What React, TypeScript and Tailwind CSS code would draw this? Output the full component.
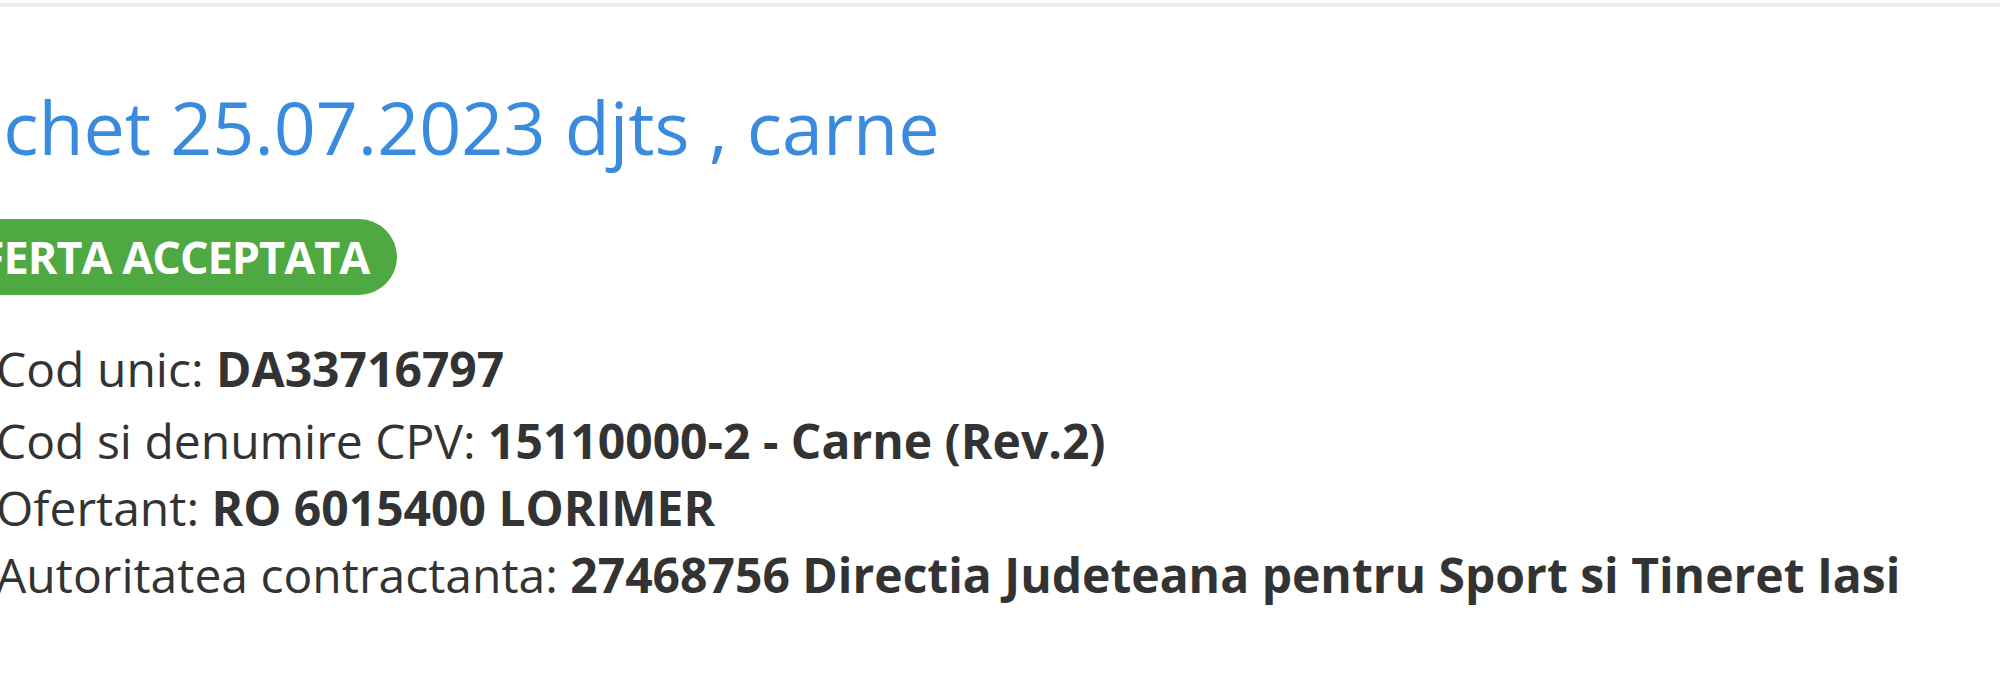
import React from 'react';

const rows = [
  { label: 'Cod unic:', value: 'DA33716797' },
  { label: 'Cod si denumire CPV:', value: '15110000-2 - Carne (Rev.2)' },
  { label: 'Ofertant:', value: 'RO 6015400 LORIMER' },
  { label: 'Autoritatea contractanta:', value: '27468756 Directia Judeteana pentru Sport si Tineret Iasi' },
];

export default function App() {
  return (
    <div className="w-[2000px] h-[700px] overflow-hidden bg-white font-['Open_Sans',sans-serif]">
      <div className="mt-[3px] h-[4px] bg-[#eceee8]" />

      <div className="flex flex-col pt-[83px]">
        <h1 className="-ml-[82px] text-[73.6px] leading-none font-normal text-[#3a8ade] whitespace-nowrap">
          Pachet 25.07.2023 djts , carne
        </h1>

        <div className="mt-[55px] -ml-[82px] flex">
          <span className="h-[76px] pl-[27px] pr-[28px] flex items-center rounded-full bg-[#4ea943] text-white font-bold text-[45px] tracking-[-1px] whitespace-nowrap">
            OFERTA ACCEPTATA
          </span>
        </div>

        <div className="mt-[40px] -ml-[4px] flex flex-col text-[48px] leading-[67px] text-[#333333]">
          {rows.map((row, i) => (
            <div key={row.label} className={`whitespace-nowrap ${i === 0 ? 'mb-[5px]' : ''}`}>
              {row.label} <span className="font-bold">{row.value}</span>
            </div>
          ))}
        </div>
      </div>
    </div>
  );
}
